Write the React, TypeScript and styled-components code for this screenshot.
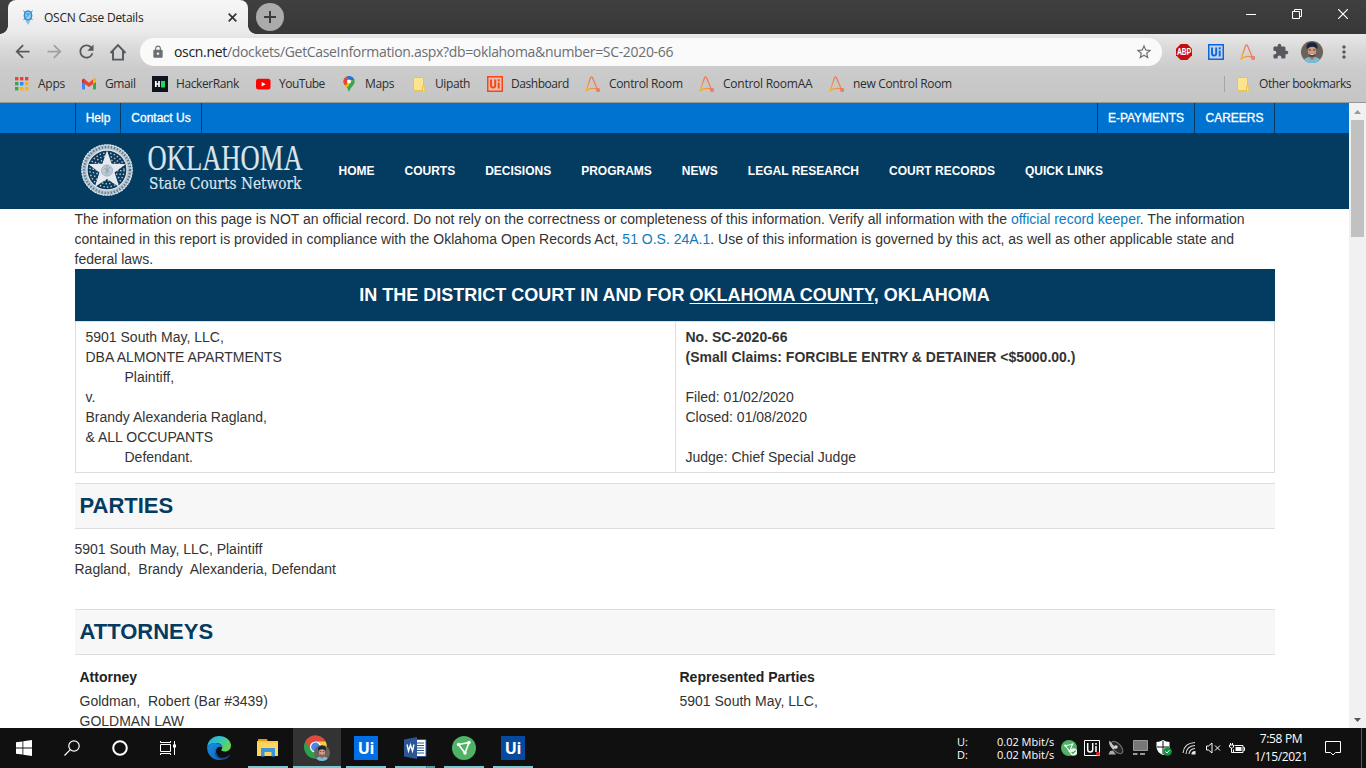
import React from "react";
import styled, { createGlobalStyle } from "styled-components";
import { MdArrowBack, MdArrowForward, MdRefresh, MdLock, MdStarBorder, MdExtension, MdMoreVert } from "react-icons/md";

const GlobalStyle = createGlobalStyle`
  *, *::before, *::after { box-sizing: border-box; }
  html, body { margin: 0; padding: 0; overflow: hidden; }
  svg { display: block; flex: none; }
`;

const ui = `"Open Sans", "Noto Sans", sans-serif`;
const arial = `"Liberation Sans", Arial, sans-serif`;

const Desktop = styled.div`
  width: 1366px; height: 768px; display: flex; flex-direction: column;
  overflow: hidden; background: #fff; font-family: ${arial};
`;
const Txt = styled.span<{ $ls?: number }>`
  white-space: pre; letter-spacing: ${(p) => p.$ls ?? 0}px;
`;

/* ---- browser window frame ---- */
const TabStrip = styled.div`
  height: 34px; flex: none; display: flex; background: linear-gradient(#3f3f3f, #383838);
  padding-left: 8px; font-family: ${ui};
`;
const Tab = styled.div`
  position: relative; width: 240px; height: 34px; border-radius: 8px 8px 0 0;
  background: linear-gradient(#f7f7f7, #e9e9e9);
  display: flex; align-items: center; padding: 0 11px 0 12px; font-size: 12px; color: #222;
  &::before, &::after {
    content: ""; position: absolute; bottom: 0; width: 8px; height: 8px;
  }
  &::before { left: -8px; background: radial-gradient(circle at 0 0, transparent 7.5px, #e9e9e9 8px); }
  &::after { right: -8px; background: radial-gradient(circle at 100% 0, transparent 7.5px, #e9e9e9 8px); }
`;
const TabTitle = styled(Txt)` margin-left: 8px; flex: 1; `;
const NewTab = styled.div`
  width: 28px; height: 28px; margin: 3px 0 0 8px; border-radius: 50%; background: #ababab;
  display: grid; place-items: center;
`;
const WindowButtons = styled.div`
  margin-left: auto; display: flex; align-items: center; padding-bottom: 6px;
`;
const WindowButton = styled.div` width: 46px; display: grid; place-items: center; `;

const Chrome = styled.div`
  height: 69px; flex: none; border-bottom: 1px solid #979797;
  background: linear-gradient(#e8e8e8 0, #d8d8d8 16px, #cbcbcb 36px, #c5c5c5 100%);
  font-family: ${ui};
`;
const Toolbar = styled.div`
  height: 35px; display: flex; align-items: center; padding: 0 12px; color: #55585c;
`;
const ToolButton = styled.div<{ $w: number; $dim?: boolean }>`
  width: ${(p) => p.$w}px; display: grid; place-items: center; color: ${(p) => (p.$dim ? "#a0a0a0" : "#55585c")};
`;
const Omnibox = styled.div`
  width: 1022px; height: 28px; border-radius: 14px; background: #fafafa;
  display: flex; align-items: center; padding: 0 9px 0 11px; font-size: 14px; color: #6b6e72;
  b { font-weight: 400; color: #222; }
`;
const Url = styled(Txt)` flex: 1; margin-left: 9px; `;

const Bookmarks = styled.div`
  height: 33px; display: flex; align-items: center; padding: 0 0 4px 14px; font-size: 12px; color: #2d2d2d;
`;
const Bookmark = styled.div<{ $w: number }>`
  width: ${(p) => p.$w}px; flex: none; display: flex; align-items: center;
`;
const BookmarkIcon = styled.span` width: 24px; flex: none; display: flex; align-items: center; `;
const OtherBookmarks = styled.div`
  margin-left: auto; border-left: 1px solid #a4a4a4; height: 16px; width: 142px; padding-left: 10px;
  display: flex; align-items: center;
`;

/* ---- web page ---- */
const Viewport = styled.div` height: 625px; flex: none; display: flex; overflow: hidden; `;
const Page = styled.div` width: 1349px; color: #333; font-size: 14px; line-height: 20px; `;
const TopBar = styled.div`
  height: 30px; background: #0072cf; padding: 0 74px 0 75px; display: flex; justify-content: space-between;
  color: #fff; font-size: 12px; line-height: 30px; -webkit-text-stroke: 0.3px #fff;
`;
const LinkGroup = styled.div` display: flex; border-left: 1px solid #043b60; `;
const TopLink = styled.div<{ $w: number }>`
  width: ${(p) => p.$w}px; text-align: center; border-right: 1px solid #043b60;
`;
const NavBar = styled.div`
  height: 76px; background: #043b60; padding-left: 79px; display: flex; color: #fff;
`;
const SealBox = styled.div` padding: 9px 9px 0 0; `;
const Menu = styled.nav`
  display: flex; gap: 30px; margin-left: 34.5px; font-weight: 700; font-size: 12px; line-height: 76px;
`;
const Content = styled.main` width: 1200px; margin-left: 75px; `;
const Notice = styled.p`
  margin: 0 0 0 -0.5px; height: 60px; white-space: nowrap;
  a { color: #0c7bbf; }
`;
const CaseHeading = styled.h2`
  margin: 0; height: 52px; background: #043b60; color: #fff; text-align: center; padding-right: 1px;
  font-size: 18px; line-height: 52px; font-weight: 700;
  u { text-underline-offset: 2px; }
`;
const CaseStyle = styled.div`
  height: 152px; border: 1px solid #ddd; display: grid; grid-template-columns: 599px 1fr;
`;
const Cell = styled.div`
  padding: 5px 9.5px; white-space: pre;
  & + & { border-left: 1px solid #ddd; }
`;
const Line = styled.div<{ $indent?: boolean }>`
  height: 20px; padding-left: ${(p) => (p.$indent ? 39 : 0)}px; white-space: pre;
`;
const SectionTitle = styled.h2<{ $mt: number }>`
  margin: ${(p) => p.$mt}px 0 0; height: 46px; padding-left: 4.5px; background: #f7f7f7; color: #043b60;
  border-top: 1px solid #ddd; border-bottom: 1px solid #ddd; font-size: 22px; line-height: 43px;
`;
const Parties = styled.div` margin: 10px 0 0 -0.5px; height: 70px; `;
const Attorneys = styled.div`
  display: grid; grid-template-columns: 600px 600px; padding: 12px 0 0 4.5px;
`;
const ColumnHead = styled.div` height: 24px; font-weight: 700; color: #222; `;

const ScrollTrack = styled.div`
  width: 17px; background: #f1f1f1; display: flex; flex-direction: column; align-items: center;
`;
const ScrollArrow = styled.div<{ $down?: boolean }>`
  width: 17px; height: 17px; display: grid; place-items: center;
  margin-top: ${(p) => (p.$down ? "auto" : "0")};
`;
const ScrollThumb = styled.div` width: 13px; height: 117px; background: #c1c1c1; `;

/* ---- taskbar ---- */
const Taskbar = styled.div`
  height: 40px; flex: none; background: #101010; display: flex; color: #fff; font-family: ${ui}; font-size: 12px;
`;
const SystemSlot = styled.div` width: 48px; display: grid; place-items: center; `;
const Apps = styled.div` display: flex; gap: 1px; margin-left: 3px; `;
const AppSlot = styled.div<{ $active?: boolean; $line?: string }>`
  width: 48px; height: 40px; display: grid; place-items: center;
  background: ${(p) => (p.$line ?? "none")} no-repeat center bottom / ${(p) => (p.$active ? 48 : 40)}px 2px
    ${(p) => (p.$active ? ", linear-gradient(#333, #333)" : "")};
`;
const UiTile = styled.div<{ $bg: string }>`
  width: 24px; height: 24px; background: ${(p) => p.$bg}; color: #fff; text-align: center;
  font: 700 16px/24px ${ui}; letter-spacing: -0.2px;
`;
const Tray = styled.div` margin-left: auto; display: flex; align-items: center; `;
const Meter = styled.div`
  display: grid; grid-template-columns: 40px 60px; width: 101px; font-size: 11px; line-height: 13px;
`;
const TrayIcon = styled.div<{ $w?: number }>`
  width: ${(p) => p.$w ?? 24}px; display: grid; place-items: center;
`;
const Clock = styled.div`
  width: 72px; text-align: center; line-height: 18px; margin-left: -5px; padding-bottom: 1px; letter-spacing: -0.35px;
`;
const Notify = styled.div` margin-left: 8px; width: 36px; height: 40px; display: flex; align-items: center; `;
const ShowDesktop = styled.div` width: 5px; height: 40px; border-left: 1px solid #5a5a5a; `;

const Folder = () => (
  <svg width="16" height="16" viewBox="0 0 16 16">
    <path d="M2.5 1.5h10v9h1.5v4H2.5z" fill="#fde48f" stroke="#ecc352" />
    <path d="M11.5 14.5v-4h2.5v4" fill="#fde48f" stroke="#e8bd48" />
  </svg>
);
const ControlRoom = () => (
  <svg width="16" height="16" viewBox="0 0 16 16" fill="none" strokeWidth="1.3" strokeLinecap="round">
    <defs>
      <linearGradient id="aa" gradientUnits="userSpaceOnUse" x1="1" y1="15" x2="10" y2="5">
        <stop offset="0" stopColor="#fbb916" /><stop offset=".6" stopColor="#f08a52" /><stop offset="1" stopColor="#ee7658" />
      </linearGradient>
    </defs>
    <path d="M.9 15.2 5.600 1.5Q6.500.2 7.400 1.500L11.800 12M.9 15.2Q4.500 11.500 11.500 12.800" stroke="url(#aa)" />
    <circle cx="13.1" cy="14" r="1.3" stroke="#ee6b4f" />
  </svg>
);
const UiBadge = ({ color, bg }: { color: string; bg: string }) => (
  <svg width="16" height="16" viewBox="0 0 16 16">
    <rect x=".75" y=".75" width="14.500" height="14.500" fill={bg} stroke={color} strokeWidth="1.500" />
    <path d="M4 3.500v6q0 2.100 2.100 2.100t2.100-2.100v-6M11.700 6.500v6" stroke={color} strokeWidth="1.900" fill="none" />
    <rect x="10.700" y="3.300" width="2" height="2" fill={color} />
  </svg>
);
const AppsGrid = () => (
  <svg width="16" height="16" viewBox="0 0 16 16">
    {["#ea4335", "#ea4335", "#ea4335", "#34a853", "#2a8cf0", "#fbb30a", "#34a853", "#fbb30a", "#fbb30a"].map((c, i) => (
      <rect key={i} x={1 + (i % 3) * 5} y={1 + Math.floor(i / 3) * 5} width="3.4" height="3.4" fill={c} />
    ))}
  </svg>
);
const Gmail = () => (
  <svg width="16" height="16" viewBox="0 0 16 16">
    <path d="M1 4h3v9.5H2q-1 0-1-1z" fill="#4285f4" />
    <path d="M12 4h3v8.500q0 1-1 1h-2z" fill="#34a853" />
    <path d="M1 4.500Q1 2.500 3 2.500L8 6.700l5-4.200q2 0 2 2V6L8 11 1 6z" fill="#ea4335" />
    <path d="M12 3.300l1-.8q2 0 2 2V6l-3 2.100z" fill="#fbbc04" />
    <path d="M1 4.500V6l1.500 1V3z" fill="#c5221f" />
  </svg>
);
const HackerRank = () => (
  <svg width="16" height="16" viewBox="0 0 16 16">
    <path d="M0 0h16v16H0z" fill="#0e141e" />
    <path d="M3.800 5v6M7 5v6M3.800 8H7" stroke="#fff" strokeWidth="1.700" />
    <path d="M9 5h4v6.500H9z" fill="#1fdb5a" />
  </svg>
);
const YouTube = () => (
  <svg width="16" height="16" viewBox="0 0 16 16">
    <rect x="1" y="2.800" width="14.500" height="10.800" rx="2.500" fill="#f00" />
    <path d="M6.700 5.900v4.600L10.600 8.200z" fill="#fff" />
  </svg>
);
const Maps = () => (
  <svg width="16" height="16" viewBox="0 0 16 16">
    <defs><clipPath id="pin"><path d="M8 0a5.500 5.500 0 0 1 5.500 5.500C13.500 9.500 9 11 8 16 7 11 2.500 9.500 2.500 5.500A5.500 5.500 0 0 1 8 0z" /></clipPath></defs>
    <g clipPath="url(#pin)">
      <path d="M0 0h16v16H0z" fill="#34a853" />
      <path d="M0 11 10 0h6L4 14z" fill="#fbbc04" />
      <path d="M8 5.500 4 10-1 5 8-1z" fill="#ea4335" />
      <path d="M7-1 7 4l6 .5L16 0z" fill="#1a73e8" />
      <path d="M9 6l5-3v12H6z" fill="#34a853" />
    </g>
    <circle cx="8" cy="5.500" r="2" fill="#fff" />
  </svg>
);
const Seal = () => (
  <svg width="56" height="56" viewBox="0 0 56 56">
    <circle cx="28" cy="28" r="25.500" fill="#b4c2ce" />
    <circle cx="28" cy="28" r="23" fill="none" stroke="#54758e" strokeWidth="2.400" strokeDasharray="1.200 1.900" />
    <circle cx="28" cy="28" r="25.200" fill="none" stroke="#dce4ea" strokeWidth="1.200" strokeDasharray="2 .8" />
    <circle cx="28" cy="28" r="20" fill="#0b3a5c" stroke="#dce4ea" strokeWidth="1.300" />
    <circle cx="28" cy="28" r="17" fill="none" stroke="#b5c4cf" strokeWidth="1.500" strokeDasharray="1.400 2.200" />
    <circle cx="28" cy="28" r="13.800" fill="none" stroke="#b5c4cf" strokeWidth="1.500" strokeDasharray="1.400 2.200" />
    <circle cx="28" cy="28" r="10.600" fill="none" stroke="#b5c4cf" strokeWidth="1.500" strokeDasharray="1.400 2.200" />
    <path d="M28 8.500l4.700 13.200 14 .4-11.100 8.500 4.600 14.400L28 37l-12.200 8 4.600-14.400L9.300 22.100l14-.4z" fill="#e4eaef" />
    <circle cx="28" cy="28.500" r="5.600" fill="#bdcad4" stroke="#9db0be" strokeWidth=".8" />
    <path d="M25 26l6 4M31 25l-5 6M28 23v10" stroke="#7f98aa" strokeWidth=".7" />
  </svg>
);
const Wordmark = () => (
  <svg width="160" height="76" viewBox="0 0 160 76" fill="#dce5ec" stroke="#dce5ec" strokeWidth=".2">
    <g transform="translate(3.500 37) scale(.76 1)"><text fontFamily="Liberation Serif, serif" fontSize="35">OKLAHOMA</text></g>
    <g transform="translate(5 55.500) scale(.83 1)"><text fontFamily="DejaVu Serif, serif" fontSize="16.500">State Courts Network</text></g>
  </svg>
);
const Portrait = ({ size }: { size: number }) => (
  <svg width={size} height={size} viewBox="0 0 22 22">
    <defs><clipPath id="face"><circle cx="11" cy="11" r="11" /></clipPath></defs>
    <g clipPath="url(#face)">
      <path d="M0 0h22v22H0z" fill="#6c625c" />
      <path d="M2 22q0-5 6-6h6q6 1 6 6z" fill="#72bfdb" />
      <path d="M8.500 13h5v4l-2.500 2-2.500-2z" fill="#a8705a" />
      <ellipse cx="11" cy="10.500" rx="4" ry="5.300" fill="#d09c84" />
      <path d="M7.600 13.200q3.400-1 6.800 0-.6 2.800-3.400 2.800t-3.400-2.800z" fill="#5a4038" />
      <path d="M9.300 13.100h3.400v1H9.300z" fill="#e8d8cc" />
      <path d="M5.500 8Q4.500 1.500 11 1.200 17.500 1.500 16.500 8q-2-2.500-5.500-2.300T5.500 8z" fill="#182438" />
      <path d="M8 9h2M12 9h2" stroke="#251c1c" strokeWidth=".8" />
    </g>
  </svg>
);
const Edge = () => (
  <svg width="24" height="24" viewBox="0 0 24 24">
    <defs>
      <linearGradient id="e1" x1="0" y1="0" x2="1" y2=".5"><stop offset="0" stopColor="#2aa9dd" /><stop offset=".5" stopColor="#30c4c9" /><stop offset="1" stopColor="#63d650" /></linearGradient>
      <linearGradient id="e2" x1="0" y1="0" x2=".5" y2="1"><stop offset="0" stopColor="#198bd8" /><stop offset="1" stopColor="#1070cc" /></linearGradient>
    </defs>
    <path d="M.2 11C1 4 6 0 12 0c7 0 12 4.500 12 9.500 0 3.500-2.500 6-6 6-3 0-4-1-3.600-1.900.8-1 .9-1.600.9-2.600C15.300 8.500 12 7 9 7 5 7 1.500 8.500.2 11z" fill="url(#e1)" />
    <path d="M.2 11C1.500 8 5 6.700 8.500 7c4 .3 6.800 2 6.800 4.500-2.500-2-6.500-.5-6.300 3.800C9.200 20 13 23 16 23.300 8 26-.5 20 .2 11z" fill="url(#e2)" />
    <path d="M9.500 12c-3 4 .5 9.500 5 9.700 4 .2 6-1 7.800-2.700.5-.3.800 0 .5.500C21 22.500 17.500 24 14.500 23.700 8 23 5.500 15 9.500 12z" fill="#124b96" />
  </svg>
);
const Explorer = () => (
  <svg width="22" height="20" viewBox="0 0 22 20">
    <path d="M1 1h9l1 3H1z" fill="#e09a10" />
    <path d="M0 3h21v15H0z" fill="#fcd462" />
    <path d="M0 3h21v2H0z" fill="#fbc847" />
    <path d="M4 10h14v8.500h-3.500V14h-7v4.500H4z" fill="#3b95dd" />
  </svg>
);
const ChromeIcon = () => (
  <svg width="26" height="26" viewBox="0 0 26 26">
    <circle cx="11.500" cy="12" r="11.500" fill="#2ba14b" />
    <path d="M1.500 6.300A11.500 11.500 0 0 1 21.500 6.500H11.500L6.500 15z" fill="#dd4b3e" />
    <path d="M21.500 6.500A11.500 11.500 0 0 1 11.500 23.500L16.500 14.500 11.500 6.500z" fill="#fbcd32" />
    <circle cx="11.500" cy="12" r="5.600" fill="#fff" /><circle cx="11.500" cy="12" r="4.400" fill="#4587ee" />
    <svg x="10" y="10" width="16" height="16"><Portrait size={16} /></svg>
  </svg>
);
const Word = () => (
  <svg width="23" height="22" viewBox="0 0 23 22">
    <path d="M11 2.500h11v17H11z" fill="#fff" stroke="#2b579a" />
    <path d="M13 6h7M13 8.500h7M13 11h7M13 13.500h7M13 16h7" stroke="#2b579a" strokeWidth="1" />
    <path d="M0 2.500 13 0v22L0 19.500z" fill="#2b5797" />
    <path d="M3 7.500l1.500 6.500L6.500 8l2 6L10 7.500" fill="none" stroke="#fff" strokeWidth="1.400" />
  </svg>
);
const Network = ({ size, badge }: { size: number; badge?: boolean }) => (
  <svg width={size} height={size} viewBox="0 0 24 24">
    <circle cx="12" cy="12" r="12" fill="#4fb265" />
    <path d="M6.500 8.500 17 6.500 13 17z" fill="none" stroke="#fff" strokeWidth="1.600" />
    <circle cx="6.500" cy="8.500" r="1.700" fill="#fff" /><circle cx="17" cy="6.500" r="1.700" fill="#fff" /><circle cx="13" cy="17" r="1.700" fill="#fff" />
    {badge && <><circle cx="19" cy="18" r="5.500" fill="#e8f5ea" /><path d="M16 18l2 2 4-4" fill="none" stroke="#2f8d45" strokeWidth="1.600" /></>}
  </svg>
);

const bookmarks: { label: string; w: number; icon: React.ReactNode; ls?: number }[] = [
  { label: "Apps", w: 67, icon: <AppsGrid />, ls: -0.25 },
  { label: "Gmail", w: 71, icon: <Gmail />, ls: -0.4 },
  { label: "HackerRank", w: 103, icon: <HackerRank />, ls: -0.4 },
  { label: "YouTube", w: 86, icon: <YouTube />, ls: -0.5 },
  { label: "Maps", w: 70, icon: <Maps />, ls: -0.35 },
  { label: "Uipath", w: 76, icon: <Folder />, ls: -0.4 },
  { label: "Dashboard", w: 98, icon: <UiBadge color="#fa4616" bg="#e6bdb0" />, ls: -0.45 },
  { label: "Control Room", w: 114, icon: <ControlRoom />, ls: -0.33 },
  { label: "Control RoomAA", w: 130, icon: <ControlRoom />, ls: -0.25 },
  { label: "new Control Room", w: 140, icon: <ControlRoom />, ls: -0.33 },
];
const menu = ["HOME", "COURTS", "DECISIONS", "PROGRAMS", "NEWS", "LEGAL RESEARCH", "COURT RECORDS", "QUICK LINKS"];
const teal = "linear-gradient(#76cbd2, #76cbd2)";

export default function App() {
  return (
    <Desktop>
      <GlobalStyle />
      <TabStrip>
        <Tab>
          <svg width="16" height="16" viewBox="0 0 16 16" fill="none" stroke="#2b8bd0">
            <ellipse cx="8" cy="6.500" rx="3.600" ry="4.500" fill="#9bcdf0" strokeWidth="1.500" />
            <path d="M3.500 1.500l2 2.500M12.500 1.500l-2 2.500M3.500 11l2-2M12.500 11l-2-2M6 8.500l4-4M6 5h3" />
            <path d="M5.500 12h5L8 16z" fill="#8cc4ec" stroke="none" />
          </svg>
          <TabTitle $ls={-0.25}>OSCN Case Details</TabTitle>
          <svg width="9" height="9" viewBox="0 0 9 9" stroke="#333" strokeWidth="1.700"><path d="M.7.7l7.600 7.600M8.300.7L.7 8.300" /></svg>
        </Tab>
        <NewTab>
          <svg width="12" height="12" viewBox="0 0 12 12" stroke="#3c3c3c" strokeWidth="2"><path d="M6 0v12M0 6h12" /></svg>
        </NewTab>
        <WindowButtons>
          <WindowButton><svg width="10" height="10" viewBox="0 0 10 10"><path d="M0 5h10v1H0z" fill="#fff" /></svg></WindowButton>
          <WindowButton><svg width="10" height="10" viewBox="0 0 10 10" fill="none" stroke="#fff"><path d="M.5 2.500h7v7h-7zM2.500 2.500v-2h7v7h-2" /></svg></WindowButton>
          <WindowButton><svg width="10" height="10" viewBox="0 0 10 10" stroke="#fff" strokeWidth="1.200"><path d="M0 0l10 10M10 0L0 10" /></svg></WindowButton>
        </WindowButtons>
      </TabStrip>
      <Chrome>
        <Toolbar>
          <ToolButton $w={20}><MdArrowBack size={21} /></ToolButton>
          <ToolButton $w={44} $dim><MdArrowForward size={21} /></ToolButton>
          <ToolButton $w={20}><MdRefresh size={21} /></ToolButton>
          <ToolButton $w={44}>
            <svg width="18" height="18" viewBox="0 0 18 18" fill="none" stroke="#55585c" strokeWidth="1.900"><path d="M1.500 10 9 2.200l7.500 7.800M4 8v8.600h10V8" /></svg>
          </ToolButton>
          <Omnibox>
            <MdLock size={14} />
            <Url $ls={-0.33}><b>oscn.net</b>/dockets/GetCaseInformation.aspx?db=oklahoma&amp;number=SC-2020-66</Url>
            <MdStarBorder size={18} />
          </Omnibox>
          <ToolButton $w={44}>
            <svg width="16" height="16" viewBox="0 0 16 16">
              <path d="M4.700 0h6.600L16 4.700v6.600L11.300 16H4.700L0 11.300V4.700z" fill="#c70d0d" />
              <g transform="translate(.9 11) scale(.87 1)"><text fontFamily="Roboto, sans-serif" fontWeight="700" fontSize="8.500" fill="#fff">ABP</text></g>
            </svg>
          </ToolButton>
          <ToolButton $w={20}><UiBadge color="#0b67df" bg="#c3d4ea" /></ToolButton>
          <ToolButton $w={44}><ControlRoom /></ToolButton>
          <ToolButton $w={20}><MdExtension size={17} /></ToolButton>
          <ToolButton $w={44}><Portrait size={22} /></ToolButton>
          <ToolButton $w={20}><MdMoreVert size={20} /></ToolButton>
        </Toolbar>
        <Bookmarks>
          {bookmarks.map((b) => (
            <Bookmark key={b.label} $w={b.w}>
              <BookmarkIcon>{b.icon}</BookmarkIcon>
              <Txt $ls={b.ls}>{b.label}</Txt>
            </Bookmark>
          ))}
          <OtherBookmarks>
            <BookmarkIcon><Folder /></BookmarkIcon>
            <Txt $ls={-0.43}>Other bookmarks</Txt>
          </OtherBookmarks>
        </Bookmarks>
      </Chrome>

      <Viewport>
        <Page>
          <TopBar>
            <LinkGroup><TopLink $w={45}>Help</TopLink><TopLink $w={81}>Contact Us</TopLink></LinkGroup>
            <LinkGroup><TopLink $w={97}>E-PAYMENTS</TopLink><TopLink $w={80}>CAREERS</TopLink></LinkGroup>
          </TopBar>
          <NavBar>
            <SealBox><Seal /></SealBox>
            <Wordmark />
            <Menu>{menu.map((m) => <Txt key={m}>{m}</Txt>)}</Menu>
          </NavBar>
          <Content>
            <Notice>
              <Txt>The information on this page is NOT an official record. Do not rely on the correctness or completeness of this information. Verify all information with the <a>official record keeper</a>. The information</Txt><br />
              <Txt>contained in this report is provided in compliance with the Oklahoma Open Records Act, <a>51 O.S. 24A.1</a>. Use of this information is governed by this act, as well as other applicable state and</Txt><br />
              <Txt>federal laws.</Txt>
            </Notice>
            <CaseHeading>IN THE DISTRICT COURT IN AND FOR <u>OKLAHOMA COUNTY</u>, OKLAHOMA</CaseHeading>
            <CaseStyle>
              <Cell>
                <Line>5901 South May, LLC,</Line>
                <Line>DBA ALMONTE APARTMENTS</Line>
                <Line $indent>Plaintiff,</Line>
                <Line>v.</Line>
                <Line>Brandy Alexanderia Ragland,</Line>
                <Line>&amp; ALL OCCUPANTS</Line>
                <Line $indent>Defendant.</Line>
              </Cell>
              <Cell>
                <Line><b>No. SC-2020-66</b></Line>
                <Line><b>(Small Claims: FORCIBLE ENTRY &amp; DETAINER &lt;$5000.00.)</b></Line>
                <Line />
                <Line>Filed: 01/02/2020</Line>
                <Line>Closed: 01/08/2020</Line>
                <Line />
                <Line>Judge: Chief Special Judge</Line>
              </Cell>
            </CaseStyle>
            <SectionTitle $mt={10}>PARTIES</SectionTitle>
            <Parties>
              <Line>5901 South May, LLC, Plaintiff</Line>
              <Line>{"Ragland,  Brandy  Alexanderia, Defendant"}</Line>
            </Parties>
            <SectionTitle $mt={0}>ATTORNEYS</SectionTitle>
            <Attorneys>
              <div>
                <ColumnHead>Attorney</ColumnHead>
                <Line>{"Goldman,  Robert (Bar #3439)"}</Line>
                <Line>GOLDMAN LAW</Line>
              </div>
              <div>
                <ColumnHead>Represented Parties</ColumnHead>
                <Line>5901 South May, LLC,</Line>
              </div>
            </Attorneys>
          </Content>
        </Page>
        <ScrollTrack>
          <ScrollArrow><svg width="7" height="4" viewBox="0 0 7 4"><path d="M0 4 3.500 0 7 4z" fill="#999" /></svg></ScrollArrow>
          <ScrollThumb />
          <ScrollArrow $down><svg width="7" height="4" viewBox="0 0 7 4"><path d="M0 0 3.500 4 7 0z" fill="#555" /></svg></ScrollArrow>
        </ScrollTrack>
      </Viewport>

      <Taskbar>
        <SystemSlot><svg width="16" height="16" viewBox="0 0 16 16" fill="#fff"><path d="M0 2.300 6.500 1.400V7.500H0zM7.300 1.300 16 0v7.500H7.300zM0 8.400h6.500v6.200L0 13.700zM7.300 8.400H16V16l-8.700-1.300z" /></svg></SystemSlot>
        <SystemSlot><svg width="16" height="16" viewBox="0 0 16 16" fill="none" stroke="#fff" strokeWidth="1.200"><circle cx="10" cy="6" r="5.200" /><path d="M6.300 9.700.5 15.500" /></svg></SystemSlot>
        <SystemSlot><svg width="16" height="16" viewBox="0 0 16 16" fill="none" stroke="#fff" strokeWidth="2"><circle cx="8" cy="8" r="6.800" /></svg></SystemSlot>
        <SystemSlot><svg width="16" height="16" viewBox="0 0 16 16" fill="none" stroke="#fff"><path d="M.5 4.500h10v7H.5zM.5 1v1.500h10V1M.5 15v-1.500h10V15M14.500 1v14" /><path d="M13 4.500h3v3h-3z" fill="#fff" stroke="none" /></svg></SystemSlot>
        <Apps>
          <AppSlot><Edge /></AppSlot>
          <AppSlot $line={teal}><Explorer /></AppSlot>
          <AppSlot $active $line={teal}><ChromeIcon /></AppSlot>
          <AppSlot $line={teal}><UiTile $bg="#006ee6">Ui</UiTile></AppSlot>
          <AppSlot $line="linear-gradient(90deg, #76cbd2 31px, #3f7d82 31px, #3f7d82 32px, #559ba0 32px)"><Word /></AppSlot>
          <AppSlot $line={teal}><Network size={24} /></AppSlot>
          <AppSlot $line={teal}><UiTile $bg="#054a9e">Ui</UiTile></AppSlot>
        </Apps>
        <Tray>
          <Meter><span>U:</span><Txt>0.02 Mbit/s</Txt><span>D:</span><Txt>0.02 Mbit/s</Txt></Meter>
          <TrayIcon $w={22}><Network size={16} badge /></TrayIcon>
          <TrayIcon>
            <svg width="16" height="16" viewBox="0 0 16 16" fill="none" stroke="#fff"><path d="M.5.500h15v15H.5z" /><path d="M3.700 3v6.500q0 2.500 2.500 2.500t2.500-2.500V3M12 6v6M12 3v1.700" strokeWidth="1.500" /><circle cx="14" cy="13.800" r="2" fill="#ee1c25" stroke="none" /></svg>
          </TrayIcon>
          <TrayIcon>
            <svg width="16" height="16" viewBox="0 0 16 16"><ellipse cx="9" cy="7.500" rx="4" ry="7.500" transform="rotate(-42 9 7.500)" fill="#262626" stroke="#777" /><path d="M1.500.5q-1.500 4 3.500 9l4-2Q4 5 1.500.5z" fill="#c4c4c4" /><circle cx="8" cy="7" r="1.700" fill="#ddd" /><path d="M.5 14.500h7.500L5 10.500l-3 .5z" fill="#aaa" /></svg>
          </TrayIcon>
          <TrayIcon><svg width="16" height="16" viewBox="0 0 16 16"><path d="M1.500.5h14v10h-14z" fill="#777" stroke="#999" /><path d="M1 13h4.500v2H1zM8 13h5v2H8z" fill="#999" /></svg></TrayIcon>
          <TrayIcon>
            <svg width="16" height="16" viewBox="0 0 16 16"><path d="M7 0q3 2 6.500 2v5q0 5-6.500 8Q.5 12 .5 7V2Q4 2 7 0z" fill="#fff" /><path d="M7 1v13M1 7h12" stroke="#111" strokeWidth="1" /><circle cx="11.500" cy="11.500" r="4.300" fill="#159347" /><path d="M9.500 11.500l1.500 1.500 2.500-2.800" stroke="#fff" fill="none" /></svg>
          </TrayIcon>
          <TrayIcon $w={26}><svg width="14" height="14" viewBox="0 0 14 14" fill="none" stroke="#ddd" strokeWidth="1.100"><path d="M1 12Q2 2 13 1.500M4 13Q4.500 5 13 4.500M7 13q.5-5 6-5.500" /><path d="M10 13q0-2.500 3-2.500V13z" fill="#fff" /></svg></TrayIcon>
          <TrayIcon $w={22}><svg width="15" height="12" viewBox="0 0 15 12" fill="none" stroke="#fff"><path d="M.5 4v4h2L6 11V1L2.500 4zM9 3.500l5 5M14 3.500l-5 5" /></svg></TrayIcon>
          <TrayIcon $w={26}><svg width="16" height="13" viewBox="0 0 16 13" fill="none" stroke="#fff"><path d="M5.500 3.500h8.500v7H4.500v-3M14.500 5.500h1v3h-1M.5 3h4v2L3 6.500.5 5zM1.500 1v2M3.500 1v2M2.500 6v4.500h2" /><path d="M6.500 5h6v4h-6z" fill="#fff" stroke="none" /></svg></TrayIcon>
          <Clock><div>7:58 PM</div><div>1/15/2021</div></Clock>
          <Notify><svg width="16" height="16" viewBox="0 0 16 16" fill="none" stroke="#fff"><path d="M.5 1.500h15v11h-5L8 15l-2.500-2.500h-5z" /></svg></Notify>
          <ShowDesktop />
        </Tray>
      </Taskbar>
    </Desktop>
  );
}
